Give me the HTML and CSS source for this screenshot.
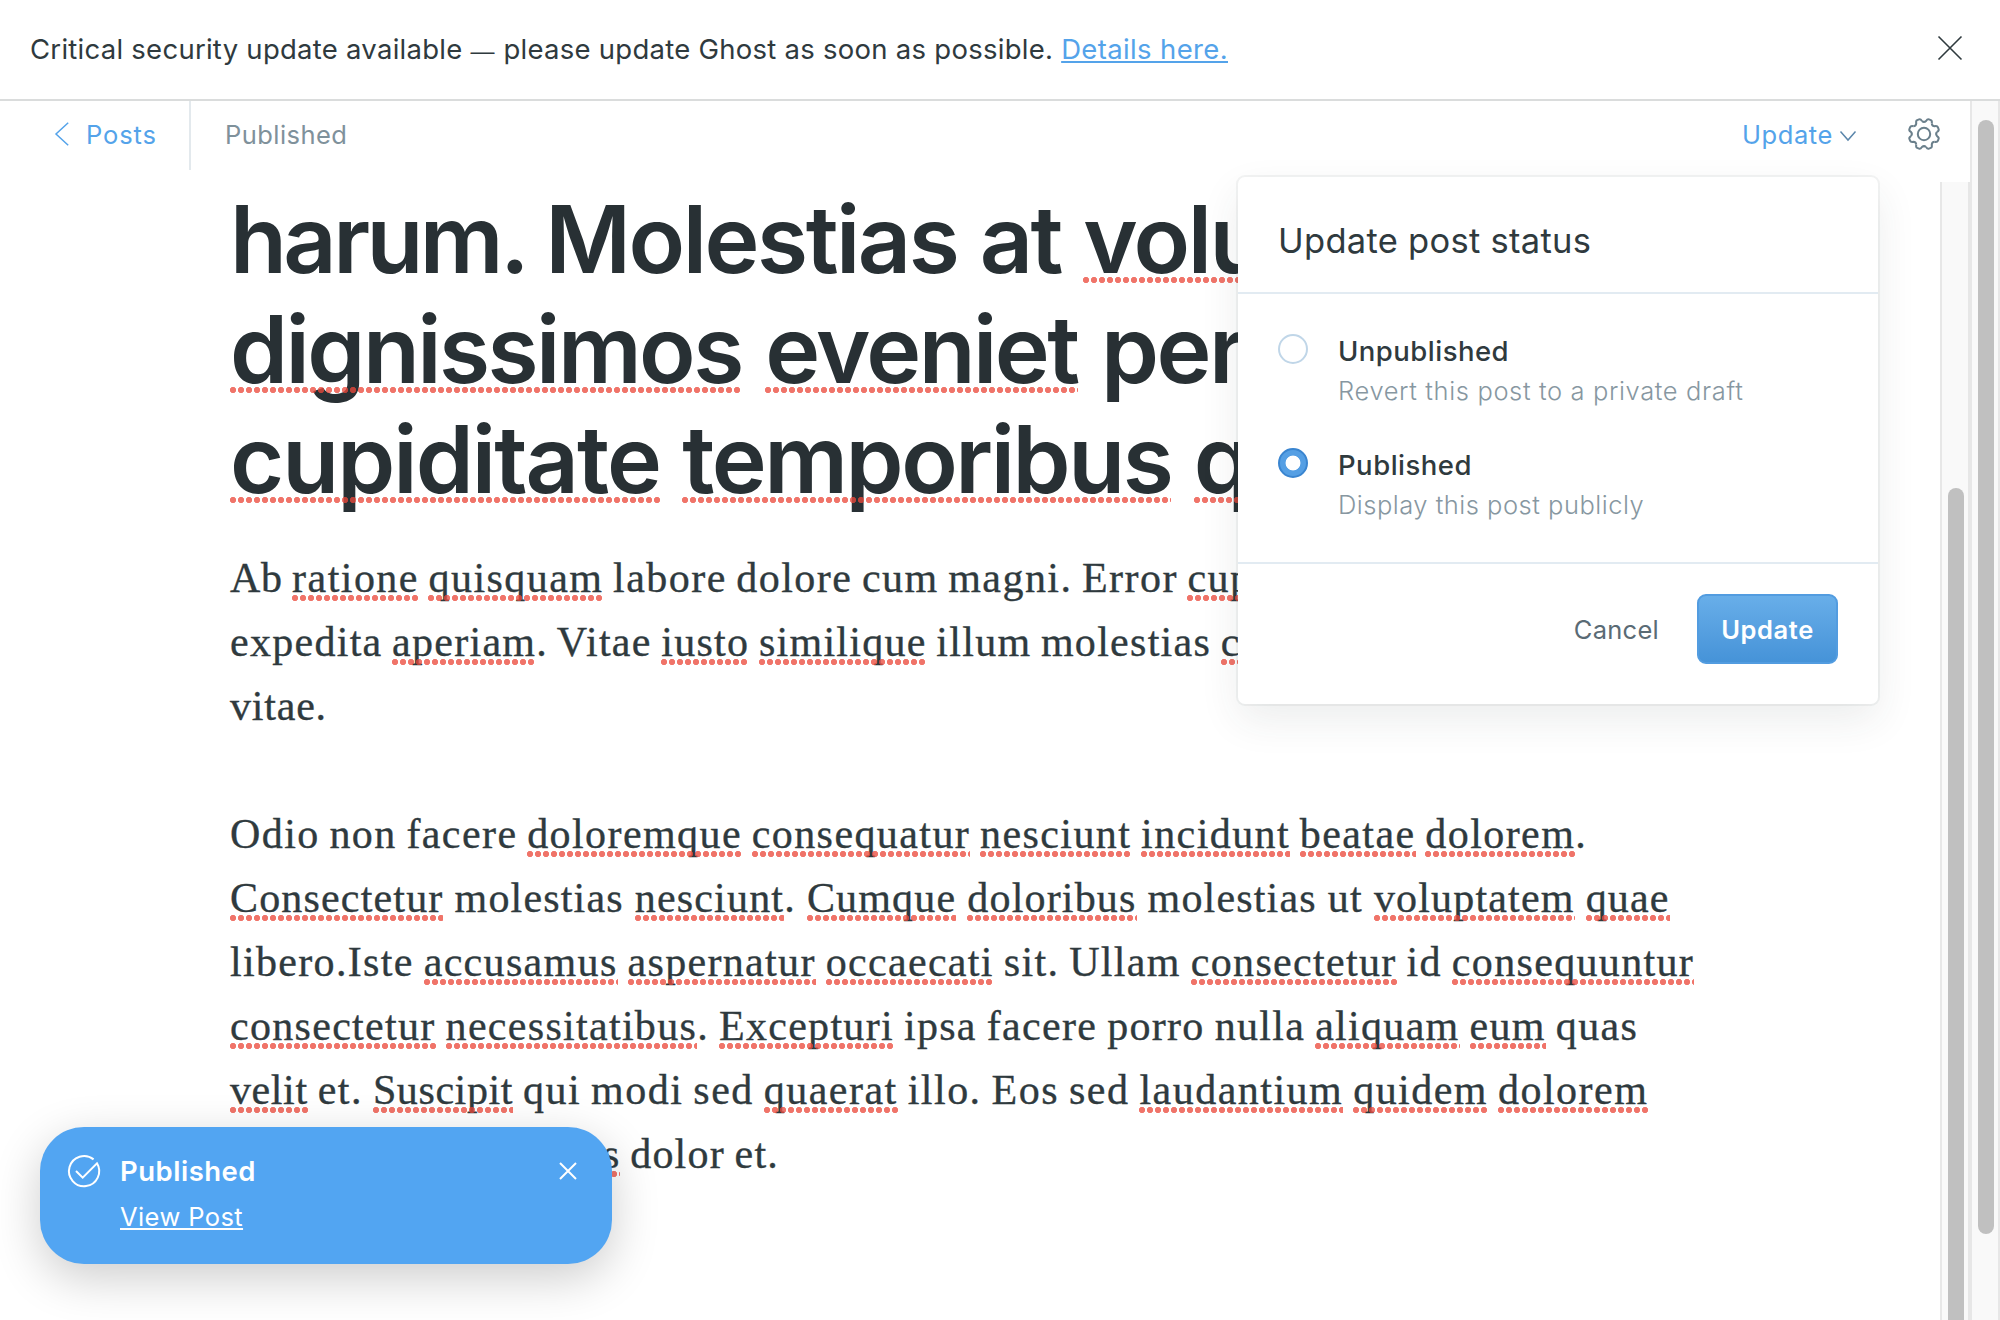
FILE: index.html
```html
<!DOCTYPE html>
<html lang="en">
<head>
<meta charset="utf-8">
<title>Editor - Ghost</title>
<link rel="stylesheet" href="styles.css">
</head>
<body>
<div class="app">
  <header class="banner">
    <p class="banner-text">Critical security update available <span class="dash">—</span> please update Ghost as soon as possible. <a class="banner-link">Details here.</a></p>
    <svg class="banner-close" viewBox="0 0 24 24"><path d="M.5.5l23 23M23.5.5l-23 23"/></svg>
  </header>

  <div class="shell">
    <main class="editor">
      <nav class="topbar">
        <a class="back">
          <svg class="back-icon" viewBox="0 0 14 24"><path d="M13.2.7L1 12l12.2 11.3"/></svg>
          <span>Posts</span>
        </a>
        <span class="status">Published</span>
        <a class="update-trigger">Update
          <svg class="chevron" viewBox="0 0 16 10"><path d="M.5.5L8 9 15.500.5"/></svg>
        </a>
        <svg class="gear" viewBox="-17 -17 34 34">
          <defs><path id="tooth" d="M-6.9-11.25Q-4.29-10.35-3.08-12.84Q-2.6-15.4-1-15.4L1-15.4Q2.600-15.4 3.080-12.84"/></defs>
          <circle r="6.2"/>
          <use href="#tooth" transform="rotate(22.5)"/>
          <use href="#tooth" transform="rotate(67.5)"/>
          <use href="#tooth" transform="rotate(112.5)"/>
          <use href="#tooth" transform="rotate(157.5)"/>
          <use href="#tooth" transform="rotate(202.5)"/>
          <use href="#tooth" transform="rotate(247.5)"/>
          <use href="#tooth" transform="rotate(292.5)"/>
          <use href="#tooth" transform="rotate(337.5)"/>
        </svg>
      </nav>

      <div class="pane">
        <article class="post">
          <h1 class="title">
            <span class="line t1"><span class="lead">harum. </span>Molestias at <i>volu</i></span>
            <span class="line t2"><i>dignissimos</i> <i>eveniet</i> per</span>
            <span class="line t3"><i>cupiditate</i> <i class="tight">temporibus</i> <i>q</i></span>
          </h1>
          <p class="para">
            <span class="line a1"><span class="snug">Ab</span> <i>ratione</i> <i>quisquam</i> labore dolore cum magni. Error <i>cup</i></span>
            <span class="line a2">expedita <i>aperiam</i>. Vitae <i>iusto</i> <i>similique</i> illum molestias <i>c</i></span>
            <span class="line a3">vitae.</span>
          </p>
          <p class="para">
            <span class="line b1">Odio non facere <i>doloremque</i> <i>consequatur</i> <i>nesciunt</i> <i>incidunt</i> <i>beatae</i> <i>dolorem</i>.</span>
            <span class="line b2"><i>Consectetur</i> molestias <i>nesciunt</i>. <i>Cumque</i> <i>doloribus</i> molestias ut <i>voluptatem</i> <i>quae</i></span>
            <span class="line b3">libero.Iste <i>accusamus</i> <i>aspernatur</i> <i>occaecati</i> sit. Ullam <i>consectetur</i> id <i>consequuntur</i></span>
            <span class="line b4"><i>consectetur</i> <i>necessitatibus</i>. <i>Excepturi</i> ipsa facere porro nulla <i>aliquam</i> <i>eum</i> quas</span>
            <span class="line b5"><i class="snug">velit</i> et. <i class="snug">Suscipit</i> qui modi sed <i>quaerat</i> illo. Eos sed <i>laudantium</i> <i>quidem</i> <i>dolorem</i></span>
            <span class="line b6"><i>doloribus</i> dolor et.</span>
          </p>
        </article>
        <div class="scroll scroll-inner"><div class="thumb"></div></div>
      </div>
    </main>
    <div class="scroll scroll-outer"><div class="thumb"></div></div>
  </div>

  <section class="popover">
    <h2 class="popover-title">Update post status</h2>
    <div class="options">
      <div class="option">
        <span class="radio"></span>
        <div>
          <div class="option-name">Unpublished</div>
          <div class="option-hint hint-a">Revert this post to a private draft</div>
        </div>
      </div>
      <div class="option">
        <span class="radio radio-on"></span>
        <div>
          <div class="option-name">Published</div>
          <div class="option-hint">Display this post publicly</div>
        </div>
      </div>
    </div>
    <footer class="actions">
      <a class="cancel">Cancel</a>
      <a class="button">Update</a>
    </footer>
  </section>

  <aside class="toast">
    <svg class="toast-icon" viewBox="0 0 32 32"><path d="M8 16l6.700 6.700L29 8.300A15.100 15.100 0 1 1 25.600 4.400"/></svg>
    <div class="toast-body">
      <div class="toast-title">Published</div>
      <a class="toast-link">View Post</a>
    </div>
    <svg class="toast-close" viewBox="0 0 18 18"><path d="M1 1l16 16M17 1L1 17"/></svg>
  </aside>
</div>
</body>
</html>
```
FILE: styles.css
```css
* { box-sizing: border-box; margin: 0; padding: 0; }

body {
  width: 2000px;
  height: 1320px;
  overflow: hidden;
  background: #fff;
  color: #2f3a3e;
  font-family: Inter, "Liberation Sans", sans-serif;
  font-size: 25.5px;
}

svg { fill: none; display: block; overflow: visible; }

.app {
  position: relative;
  display: flex;
  flex-direction: column;
  height: 1320px;
  overflow: hidden;
}

/* Security banner */
.banner {
  display: flex;
  align-items: center;
  justify-content: space-between;
  height: 101px;
  padding: 0 38px 0 30px;
  border-bottom: 2px solid #dadcdc;
}
.banner-text { font-size: 27.5px; line-height: 96px; letter-spacing: .26px; margin-bottom: 2px; }
.dash { font-family: "Liberation Sans", sans-serif; font-size: 24px; line-height: 1; letter-spacing: 0; margin: 0 1px 0 0; }
.banner-link {
  color: #54a3ea;
  letter-spacing: .36px;
  text-decoration: underline;
  text-decoration-thickness: 2px;
  text-underline-offset: 2px;
  text-decoration-skip-ink: none;
}
.banner-close { width: 24px; height: 24px; stroke: #2f3a3e; stroke-width: 1.6; margin-bottom: 3px; }

.shell { display: flex; flex: 1; min-height: 0; }
.editor { display: flex; flex-direction: column; width: 1970px; }

/* Top bar */
.topbar { display: flex; align-items: flex-start; height: 81px; line-height: 67px; }
.back {
  display: flex;
  align-items: center;
  gap: 17px;
  width: 191px;
  height: 69px;
  padding: 0 0 3px 55px;
  border-right: 2px solid #e3e9ed;
  color: #54a3ea;
  letter-spacing: .9px;
}
.back-icon { width: 14px; height: 24px; stroke: #54a3ea; stroke-width: 1.5; }
.status { padding-left: 34px; color: #7f919b; letter-spacing: .45px; }
.update-trigger {
  display: flex;
  align-items: center;
  gap: 7px;
  margin-left: auto;
  color: #54a3ea;
  letter-spacing: .6px;
}
.chevron { width: 16px; height: 10px; margin-top: 3px; stroke: #5b86ab; stroke-width: 1.5; }
.gear { width: 34px; height: 34px; margin: 16px 29px 0 51px; stroke: #6a7f8b; stroke-width: 2; }

/* Post content */
.pane { display: flex; flex: 1; min-height: 0; }
.post { flex: 1; min-width: 0; padding: 2px 0 0 230px; overflow: hidden; }
.line { display: block; white-space: nowrap; }
.title {
  margin-bottom: 32px;
  color: #283034;
  font-size: 93px;
  font-weight: 600;
  line-height: 110px;
}
.para {
  margin-bottom: 64px;
  font-family: "Liberation Serif", serif;
  font-size: 42px;
  line-height: 64px;
  -webkit-text-stroke: .35px #2f3a3e;
}

/* Misspelled words */
.line i { position: relative; font-style: normal; }
.line i::after {
  content: "";
  position: absolute;
  left: 0;
  right: 0;
  top: 40px;
  height: 6px;
  background: radial-gradient(circle at 3px 3px, rgba(235, 72, 58, .76) 2.8px, transparent 3.4px) 0 0 / 8px 6px repeat-x;
}
.title i::after { top: 94px; }

.t1 { letter-spacing: -2.5px; word-spacing: 1.4px; }
.t2 { letter-spacing: -2.55px; word-spacing: 2.6px; }
.t3 { letter-spacing: -1.95px; word-spacing: .8px; }
.lead { letter-spacing: -3.6px; }
.tight { letter-spacing: -2.45px; }
.a1 { letter-spacing: 1.46px; word-spacing: -2.4px; }
.a2 { letter-spacing: 1.282px; word-spacing: -2.25px; }
.a3 { letter-spacing: .8px; }
.b1 { letter-spacing: 1.42px; word-spacing: -2.2px; }
.b2 { letter-spacing: 1.17px; word-spacing: -.6px; }
.b3 { letter-spacing: 1.33px; word-spacing: -1.9px; }
.b4 { letter-spacing: 1.303px; word-spacing: -1.8px; }
.b5 { letter-spacing: 1.48px; word-spacing: -2px; }
.b6 { padding-left: 221px; letter-spacing: 1.2px; word-spacing: -2px; }
.snug { letter-spacing: .6px; }

/* Scrollbars */
.scroll { width: 30px; background: #f9f9f9; border: solid #e7e7e7; border-width: 0 2px; }
.scroll .thumb { width: 16px; margin-left: 6px; background: #c0c0c0; border-radius: 8px; }
.scroll-inner { padding-top: 306px; overflow: hidden; }
.scroll-inner .thumb { height: 900px; }
.scroll-outer { padding-top: 19px; }
.scroll-outer .thumb { height: 1114px; }

/* Publish menu */
.popover {
  position: absolute;
  left: 1238px;
  top: 177px;
  width: 640px;
  height: 527px;
  background: #fff;
  border-radius: 7px;
  box-shadow: 0 0 0 2px rgba(40, 55, 60, .055), 0 16px 40px rgba(40, 55, 60, .09);
}
.popover-title {
  height: 117px;
  padding: 12px 0 0 40px;
  border-bottom: 2px solid #e2ebf2;
  font-size: 34.5px;
  font-weight: 400;
  line-height: 103px;
  letter-spacing: .29px;
}
.options {
  display: flex;
  flex-direction: column;
  gap: 35px;
  height: 270px;
  padding: 37px 40px 0;
  border-bottom: 2px solid #e2ebf2;
}
.option { display: flex; gap: 30px; }
.radio { width: 30px; height: 30px; margin-top: 3px; border: 2px solid #c0d6e8; border-radius: 50%; }
.radio-on {
  border-color: #3a85d0;
  background: radial-gradient(circle, #fff 7px, #559fe4 7.8px);
}
.option-name { font-size: 27.5px; font-weight: 500; line-height: 40px; letter-spacing: .48px; }
.option-hint { color: #8797a1; font-weight: 300; line-height: 39px; letter-spacing: .5px; }
.hint-a { letter-spacing: .63px; }
.actions { display: flex; justify-content: flex-end; gap: 38px; padding: 30px 40px 0; line-height: 70px; }
.cancel { color: #5a6b75; letter-spacing: .27px; line-height: 72px; }
.button {
  width: 141px;
  height: 70px;
  border: 2px solid #529ce0;
  border-radius: 9px;
  background: linear-gradient(#68aee9, #4693d8);
  color: #fff;
  font-weight: 600;
  line-height: 67px;
  letter-spacing: .6px;
  text-align: center;
}

/* Notification */
.toast {
  position: absolute;
  left: 40px;
  top: 1127px;
  display: flex;
  width: 572px;
  height: 137px;
  padding: 24px 35px 0 28px;
  background: #52a5f2;
  border-radius: 44px;
  box-shadow: 0 14px 48px rgba(0, 0, 0, .2);
  color: #fff;
}
.toast-icon { width: 32px; height: 32px; margin-top: 4px; stroke: #fff; stroke-width: 2; }
.toast-body { flex: 1; padding-left: 20px; }
.toast-title { font-size: 27.5px; font-weight: 600; line-height: 40px; letter-spacing: .5px; }
.toast-link {
  line-height: 51px;
  letter-spacing: .4px;
  text-decoration: underline;
  text-decoration-thickness: 2px;
  text-underline-offset: 2px;
  text-decoration-skip-ink: none;
}
.toast-close { width: 18px; height: 18px; margin-top: 11px; stroke: #fff; stroke-width: 2; }
```
